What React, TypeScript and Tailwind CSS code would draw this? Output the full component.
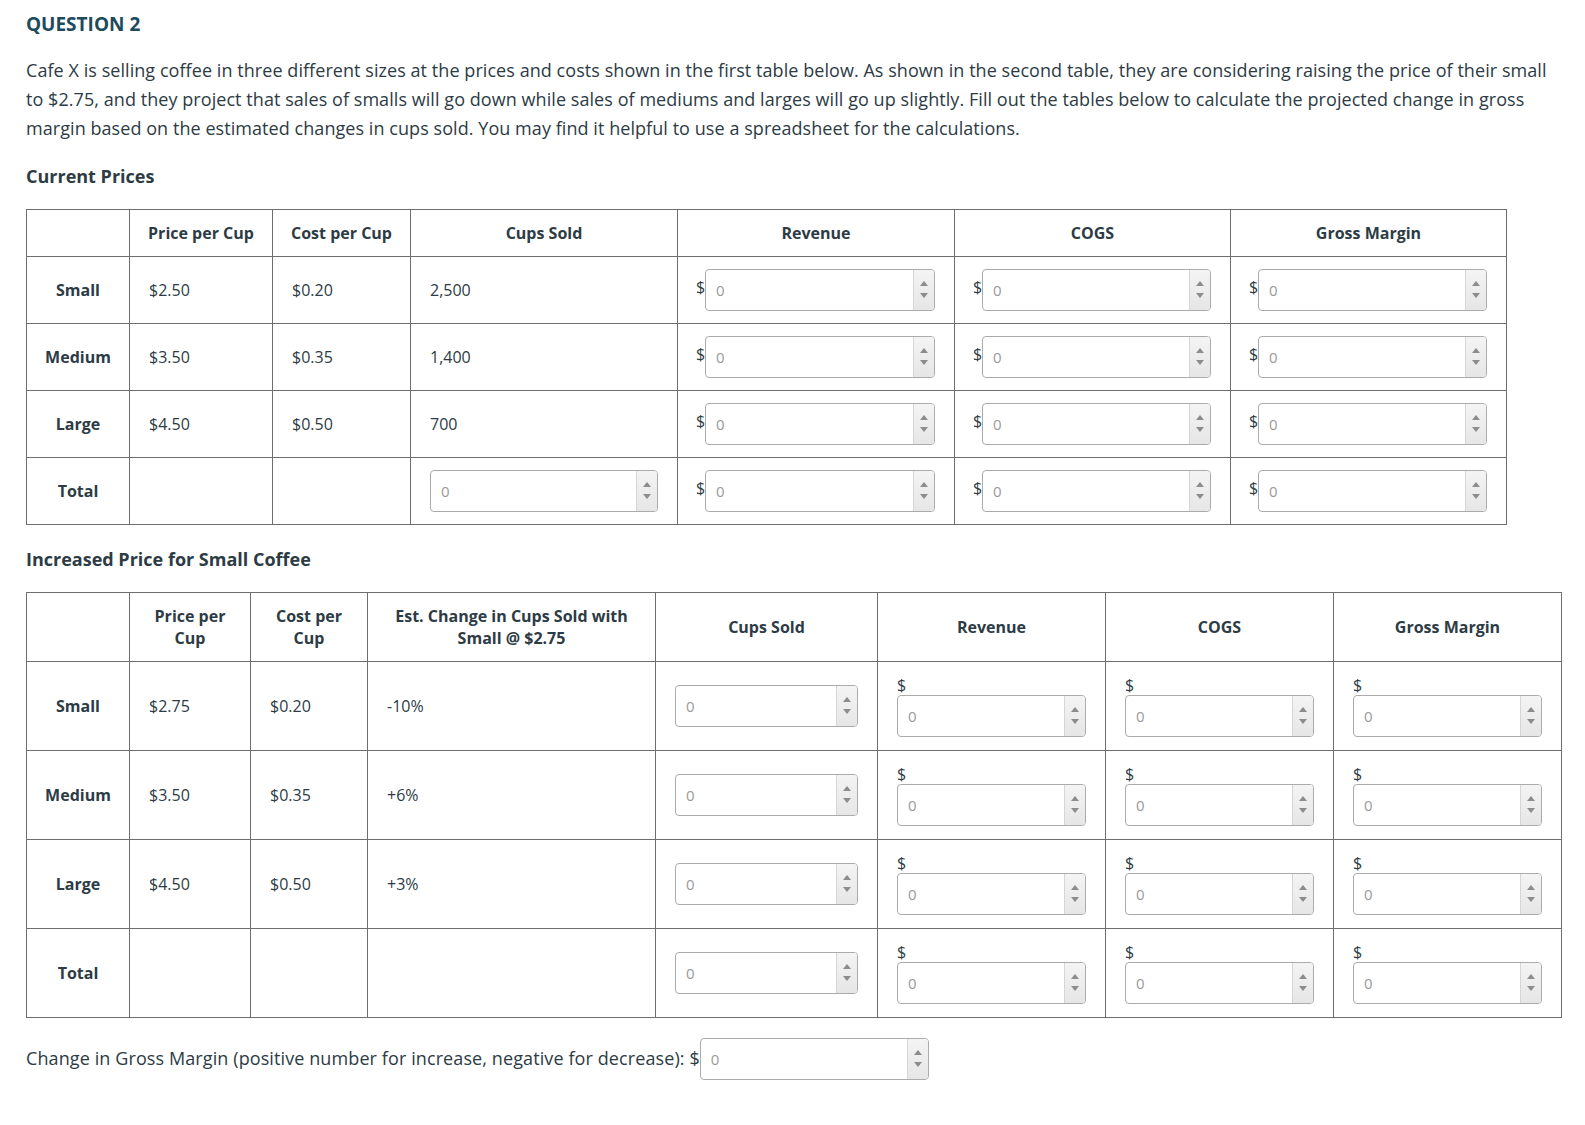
import React from "react";

type Row = { label: string; price: string; cost: string; extra: string };

const currentRows: Row[] = [
  { label: "Small", price: "$2.50", cost: "$0.20", extra: "2,500" },
  { label: "Medium", price: "$3.50", cost: "$0.35", extra: "1,400" },
  { label: "Large", price: "$4.50", cost: "$0.50", extra: "700" },
];

const increasedRows: Row[] = [
  { label: "Small", price: "$2.75", cost: "$0.20", extra: "-10%" },
  { label: "Medium", price: "$3.50", cost: "$0.35", extra: "+6%" },
  { label: "Large", price: "$4.50", cost: "$0.50", extra: "+3%" },
];

function Spinner() {
  return (
    <div className="flex w-[21px] flex-col items-center justify-between border-l border-[#d6d6d6] bg-gradient-to-b from-[#f4f4f4] to-[#e6e6e6] pt-[11px] pb-[12px]">
      <span className="h-0 w-0 border-x-[4px] border-b-[5px] border-x-transparent border-b-[#8c8c8c]" />
      <span className="h-0 w-0 border-x-[4px] border-t-[5px] border-x-transparent border-t-[#8c8c8c]" />
    </div>
  );
}

function NumBox({ className = "" }: { className?: string }) {
  return (
    <div className={`flex h-[42px] overflow-hidden rounded-[4px] border border-[#ababab] bg-white ${className}`}>
      <input
        readOnly
        placeholder="0"
        className="min-w-0 flex-1 bg-transparent pl-[10px] text-[15px] text-[#2d3b45] outline-none placeholder:text-[#9a9a9a]"
      />
      <Spinner />
    </div>
  );
}

// "$" sitting to the left of the box
function MoneyInline() {
  return (
    <div className="flex items-center">
      <span className="-ml-[1px] -mt-[6px] w-[9px] text-[16px] leading-none">$</span>
      <NumBox className="flex-1" />
    </div>
  );
}

// "$" wrapped above the box (narrow cells)
function MoneyStacked() {
  return (
    <div className="flex flex-col">
      <span className="text-[16px] leading-[20px]">$</span>
      <NumBox />
    </div>
  );
}

const th = "border border-[#6e6e6e] px-[19px] text-center font-bold leading-[22px]";
const thWide = "border border-[#6e6e6e] px-[6px] text-center font-bold leading-[22px]";
const td = "border border-[#6e6e6e] px-[19px] text-left";
const rowHead = "border border-[#6e6e6e] px-[10px] text-center font-bold";

export default function App() {
  return (
    <div className="min-h-[1125px] bg-white pl-[26px] pr-[24px] pt-[10px] text-[#2d3b45]" style={{ fontFamily: '"Open Sans", "Noto Sans", sans-serif' }}>
      <h2 className="text-[19px] font-bold leading-[28px] text-[#1d4a5d]">QUESTION 2</h2>

      <p className="mt-[18px] text-[18px] leading-[29px] tracking-[0.06px]">
        Cafe X is selling coffee in three different sizes at the prices and costs shown in the first table below. As shown in the
        second table, they are considering raising the price of their small to $2.75, and they project that sales of smalls will go
        down while sales of mediums and larges will go up slightly. Fill out the tables below to calculate the projected change in
        gross margin based on the estimated changes in cups sold. You may find it helpful to use a spreadsheet for the calculations.
      </p>

      <h3 className="mt-[20px] text-[18px] font-bold leading-[26px]">Current Prices</h3>

      {/* Current prices */}
      <table className="mt-[20px] w-[1480px] table-fixed border-collapse text-[16px]">
        <colgroup>
          <col className="w-[103px]" />
          <col className="w-[143px]" />
          <col className="w-[138px]" />
          <col className="w-[267px]" />
          <col className="w-[277px]" />
          <col className="w-[276px]" />
          <col className="w-[276px]" />
        </colgroup>
        <thead>
          <tr className="h-[47px]">
            <th className={thWide}></th>
            <th className={thWide}>Price per Cup</th>
            <th className={thWide}>Cost per Cup</th>
            <th className={thWide}>Cups Sold</th>
            <th className={thWide}>Revenue</th>
            <th className={thWide}>COGS</th>
            <th className={thWide}>Gross Margin</th>
          </tr>
        </thead>
        <tbody>
          {currentRows.map((r) => (
            <tr key={r.label} className="h-[67px]">
              <td className={rowHead}>{r.label}</td>
              <td className={td}>{r.price}</td>
              <td className={td}>{r.cost}</td>
              <td className={td}>{r.extra}</td>
              <td className={td}><MoneyInline /></td>
              <td className={td}><MoneyInline /></td>
              <td className={td}><MoneyInline /></td>
            </tr>
          ))}
          <tr className="h-[67px]">
            <td className={rowHead}>Total</td>
            <td className={td}></td>
            <td className={td}></td>
            <td className={td}><NumBox /></td>
            <td className={td}><MoneyInline /></td>
            <td className={td}><MoneyInline /></td>
            <td className={td}><MoneyInline /></td>
          </tr>
        </tbody>
      </table>

      <h3 className="mt-[21px] text-[18px] font-bold leading-[26px]">Increased Price for Small Coffee</h3>

      {/* Increased price */}
      <table className="mt-[20px] w-[1535px] table-fixed border-collapse text-[16px]">
        <colgroup>
          <col className="w-[103px]" />
          <col className="w-[121px]" />
          <col className="w-[117px]" />
          <col className="w-[288px]" />
          <col className="w-[222px]" />
          <col className="w-[228px]" />
          <col className="w-[228px]" />
          <col className="w-[228px]" />
        </colgroup>
        <thead>
          <tr className="h-[69px]">
            <th className={th}></th>
            <th className={th}>Price per Cup</th>
            <th className={th}>Cost per Cup</th>
            <th className={`${th} px-[12px]`}>Est. Change in Cups Sold with Small @ $2.75</th>
            <th className={th}>Cups Sold</th>
            <th className={th}>Revenue</th>
            <th className={th}>COGS</th>
            <th className={th}>Gross Margin</th>
          </tr>
        </thead>
        <tbody>
          {increasedRows.map((r) => (
            <tr key={r.label} className="h-[89px]">
              <td className={rowHead}>{r.label}</td>
              <td className={td}>{r.price}</td>
              <td className={td}>{r.cost}</td>
              <td className={td}>{r.extra}</td>
              <td className={td}><NumBox /></td>
              <td className={td}><MoneyStacked /></td>
              <td className={td}><MoneyStacked /></td>
              <td className={td}><MoneyStacked /></td>
            </tr>
          ))}
          <tr className="h-[89px]">
            <td className={rowHead}>Total</td>
            <td className={td}></td>
            <td className={td}></td>
            <td className={td}></td>
            <td className={td}><NumBox /></td>
            <td className={td}><MoneyStacked /></td>
            <td className={td}><MoneyStacked /></td>
            <td className={td}><MoneyStacked /></td>
          </tr>
        </tbody>
      </table>

      <div className="mt-[20px] flex items-center text-[18px]">
        <span className="-mt-[2px] tracking-[0.1px]">Change in Gross Margin (positive number for increase, negative for decrease): $</span>
        <NumBox className="w-[229px]" />
      </div>
    </div>
  );
}
